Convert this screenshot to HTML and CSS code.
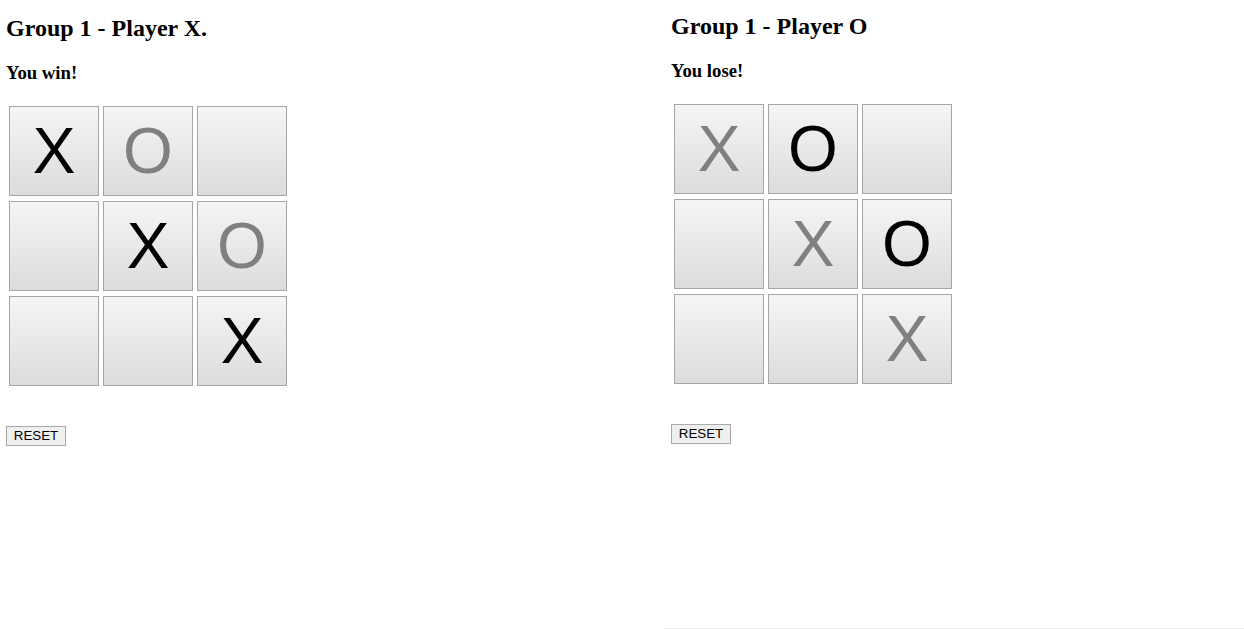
FILE: index.html
```html
<!DOCTYPE html>
<html>
<head>
<meta charset="utf-8">
<link rel="stylesheet" href="styles.css">
</head>
<body>
<div class="page">
  <section class="panel panel-left">
    <h2 class="title">Group 1 - Player X.</h2>
    <h3 class="status">You win!</h3>
    <div class="board">
      <div class="cell mine">X</div>
      <div class="cell other">O</div>
      <div class="cell"></div>
      <div class="cell"></div>
      <div class="cell mine">X</div>
      <div class="cell other">O</div>
      <div class="cell"></div>
      <div class="cell"></div>
      <div class="cell mine">X</div>
    </div>
    <button class="reset">RESET</button>
  </section>
  <section class="panel panel-right">
    <h2 class="title">Group 1 - Player O</h2>
    <h3 class="status">You lose!</h3>
    <div class="board">
      <div class="cell other">X</div>
      <div class="cell mine">O</div>
      <div class="cell"></div>
      <div class="cell"></div>
      <div class="cell other">X</div>
      <div class="cell mine">O</div>
      <div class="cell"></div>
      <div class="cell"></div>
      <div class="cell other">X</div>
    </div>
    <button class="reset">RESET</button>
  </section>
</div>
</body>
</html>
```
FILE: styles.css
```css
html, body {
  margin: 0;
  padding: 0;
  background: #ffffff;
}

.page {
  display: flex;
  width: 1244px;
  height: 629px;
  box-sizing: border-box;
}

.panel {
  box-sizing: border-box;
  font-family: "Liberation Serif", "Times New Roman", serif;
  color: #000;
}

.panel-left {
  width: 664px;
  padding: 14px 0 0 6px;
}

.panel-right {
  flex: 1;
  padding: 12px 0 0 7px;
  border-bottom: 1px solid #ececec;
}

.title {
  margin: 0;
  font-size: 24px;
  line-height: 28px;
  font-weight: bold;
}

.status {
  margin: 20px 0 0 0;
  font-size: 18.72px;
  line-height: 22px;
  font-weight: bold;
}

.board {
  display: grid;
  grid-template-columns: repeat(3, 90px);
  grid-auto-rows: 90px;
  column-gap: 4px;
  row-gap: 5px;
  margin: 22px 0 0 3px;
}

.cell {
  box-sizing: border-box;
  border: 1px solid #a6a6a6;
  background: linear-gradient(to bottom, #f5f5f5, #dcdcdc);
  font-family: "Liberation Sans", Arial, sans-serif;
  font-size: 64px;
  display: flex;
  align-items: center;
  justify-content: center;
  line-height: 1;
}

.cell.mine {
  color: #000;
}

.cell.other {
  color: #808080;
}

.reset {
  display: block;
  margin: 40px 0 0 0;
  box-sizing: border-box;
  width: 60px;
  height: 20px;
  padding: 0;
  border: 1px solid #a9a9a9;
  background: #efefef;
  font-family: "Liberation Sans", Arial, sans-serif;
  font-size: 13.33px;
  color: #000;
  line-height: 18px;
}
```
